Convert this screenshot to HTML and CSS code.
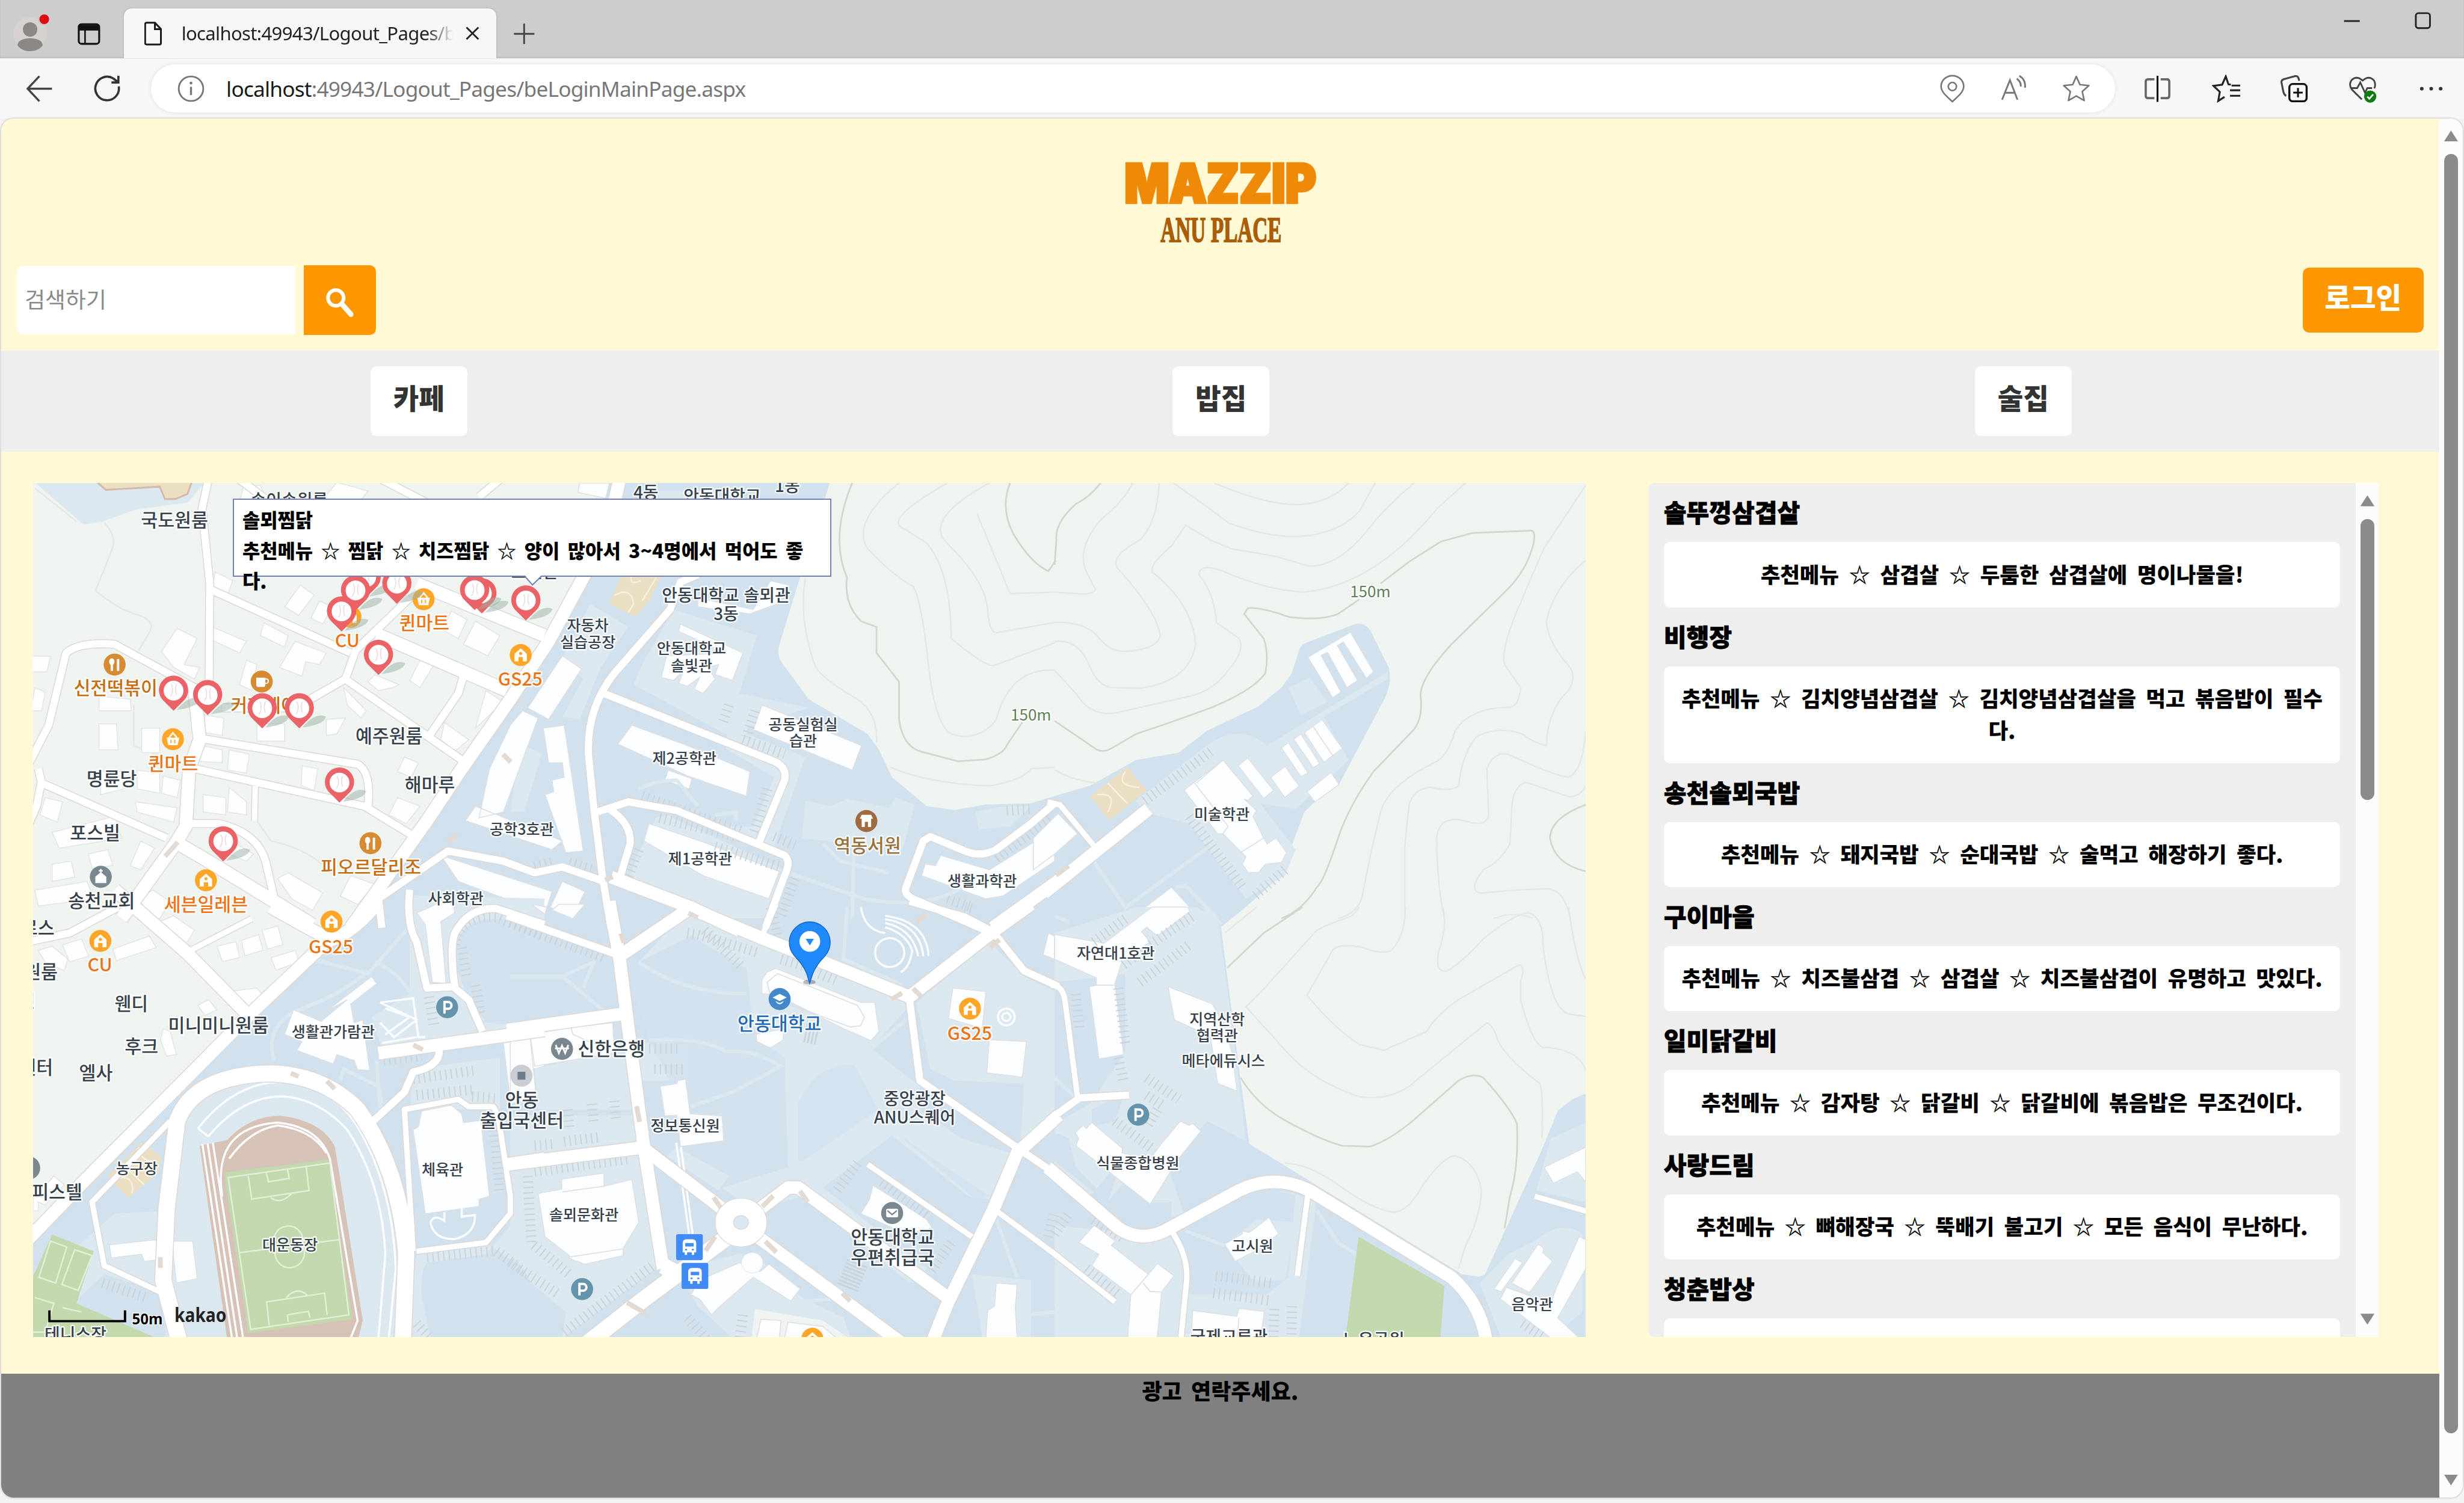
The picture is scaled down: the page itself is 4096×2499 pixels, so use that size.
FILE: index.html
```html
<!DOCTYPE html>
<html lang="ko">
<head>
<meta charset="utf-8">
<title>MAZZIP - ANU PLACE</title>
<link rel="stylesheet" href="styles.css">
</head>
<body>
<div class="window">
  <header class="tabbar">
    <svg class="avatar" viewBox="0 0 24 26"><circle cx="11.500" cy="14" r="10.500" fill="#d6d3ce"/><circle cx="11.500" cy="11.500" r="4.600" fill="#8b8782"/><path d="M3.500 21.500c0-6 16-6 16 0c-3 5-13 5-16 0z" fill="#8b8782"/><circle cx="20.500" cy="5" r="3.600" fill="#e00b0b" stroke="#cdcdcd"/></svg>
    <svg class="workspace" viewBox="0 0 16 16"><rect x="1.500" y="2" width="13" height="12.500" rx="1.800" fill="none" stroke="#111" stroke-width="1.200"/><path d="M1.500 2.500h13v3.500h-13z" fill="#111"/><path d="M5.500 5v9" stroke="#111" stroke-width="1"/></svg>
    <div class="tab">
      <svg class="tab-doc" viewBox="0 0 12 16"><path d="M1.500.8h5.500l4 4.200v9.200q0 1-1 1h-8.500q-1 0-1-1V1.800q0-1 1-1zM7 .8V5h4" fill="none" stroke="#1b1b1b" stroke-width="1.200"/></svg>
      <span class="tab-title">localhost:49943/Logout_Pages/beLogin</span>
      <svg class="tab-close" viewBox="0 0 10 10"><path d="M1 1l8 8M9 1l-8 8" stroke="#222" stroke-width="1.150"/></svg>
    </div>
    <svg class="newtab" viewBox="0 0 14 14"><path d="M7 .5v13M.5 7h13" stroke="#444" stroke-width="1.100"/></svg>
    <div class="controls">
      <svg viewBox="0 0 12 12"><path d="M1 6.500h10" stroke="#222" stroke-width="1.100"/></svg>
      <svg viewBox="0 0 12 12"><rect x="1.500" y="1.500" width="9" height="9.500" rx="1.600" fill="none" stroke="#222" stroke-width="1.100"/></svg>
    </div>
  </header>

  <div class="toolbar">
    <svg class="back" viewBox="0 0 18 18"><path d="M9 1L1.500 9L9 17M1.500 9H17" fill="none" stroke="#444" stroke-width="1.300"/></svg>
    <svg class="reload" viewBox="0 0 18 18"><path d="M16.200 7.500A7.500 7.500 0 1 1 12.800 2.500L15.500 4.600M16 .8V5H11.600" fill="none" stroke="#333" stroke-width="1.400"/></svg>
    <div class="address">
      <svg class="info" viewBox="0 0 18 18"><circle cx="9" cy="9" r="7.800" fill="none" stroke="#777" stroke-width="1.100"/><path d="M9 7.800v5.200" stroke="#777" stroke-width="1.300"/><circle cx="9" cy="5.400" r=".9" fill="#777"/></svg>
      <span class="url"><b>localhost</b>:49943/Logout_Pages/beLoginMainPage.aspx</span>
      <span class="address-icons">
        <svg viewBox="0 0 18 18"><path d="M9 17.200C5 13.500 1.800 11 1.800 7.500a7.200 6.800 0 0 1 14.400 0C16.200 11 13 13.500 9 17.200z" fill="none" stroke="#777"/><circle cx="9" cy="7.600" r="2.600" fill="none" stroke="#777"/></svg>
        <svg viewBox="0 0 18 18"><path d="M1.200 16L6.200 3.500L11 16M2.800 11.600h6.600M10.500 2.600q2.800 1.800 2.600 5M12.200 .8q4.200 2.600 3.600 7.600" fill="none" stroke="#777" stroke-width="1.100"/></svg>
        <svg viewBox="0 0 18 18"><path d="M9 1.200l2.300 5.200l5.700.6l-4.200 3.800l1.200 5.700L9 13.600l-5 2.900l1.200-5.700L1 7l5.700-.6z" fill="none" stroke="#777" stroke-linejoin="round"/></svg>
      </span>
    </div>
    <div class="tools">
      <svg viewBox="0 0 18 18"><path d="M7 3H3Q1.500 3 1.500 4.500v9Q1.500 15 3 15h4M11 3h4q1.500 0 1.500 1.500v9q0 1.500-1.500 1.500h-4" fill="none" stroke="#666" stroke-width="1.400"/><path d="M9 .8v16.600" stroke="#111" stroke-width="1.200"/></svg>
      <svg viewBox="0 0 18 18"><path d="M12 6.400L10.500 6.200L8.800 1.200L6.500 6.400L1 7.200l4 3.800L4 16.800l4-2.600M12.500 7H18M11.500 10H18M11.500 13.500H18" fill="none" stroke="#222" stroke-width="1.200"/></svg>
      <svg viewBox="0 0 18 18"><rect x="6" y="6" width="11" height="11" rx="2.200" fill="none" stroke="#111" stroke-width="1.300"/><path d="M11.500 8.500v6M8.500 11.500h6" stroke="#111" stroke-width="1.200"/><path d="M4 13.500Q2.500 13 2 10L1 5Q.8 3.500 2.400 3L9.600 1q1.700-.3 2.200 1.200L12.300 4" fill="none" stroke="#444" stroke-width="1.200"/></svg>
      <svg viewBox="0 0 18 18"><path d="M8.500 15.800L2.200 9.600Q0 6.500 1.800 3.700Q5 .2 9 3.800Q13 .2 16.200 3.700Q17.600 6.200 16.400 8.800M2 8.600h3.500L7.500 5l3 6.500L12 8.600h3" fill="none" stroke="#444" stroke-width="1.100"/><circle cx="13.800" cy="14" r="3.900" fill="#107c10"/><path d="M12 14l1.300 1.400l2.400-2.800" fill="none" stroke="#fff"/></svg>
      <svg viewBox="0 0 18 18"><g fill="#333"><circle cx="3" cy="9" r="1.150"/><circle cx="9" cy="9" r="1.150"/><circle cx="15" cy="9" r="1.150"/></g></svg>
    </div>
  </div>

  <div class="viewport">
    <div class="page">
      <div class="brand">
        <svg class="logo" viewBox="0 0 126 56">
          <text class="logo-main" x="2" y="27.500" textLength="122" lengthAdjust="spacingAndGlyphs">MAZZIP</text>
          <text class="logo-sub" x="25" y="52.500" textLength="77" lengthAdjust="spacingAndGlyphs">ANU PLACE</text>
        </svg>
      </div>
      <div class="searchrow">
        <input class="search" type="text" placeholder="검색하기">
        <button class="search-btn"><svg viewBox="0 0 18 20"><circle cx="6.600" cy="7" r="5" fill="none" stroke="#fff" stroke-width="2.300"/><path d="M10.500 11l5.700 6.500" stroke="#fff" stroke-width="3.300" stroke-linecap="round"/></svg></button>
        <button class="login">로그인</button>
      </div>
      <nav class="nav"><div><a>카페</a></div><div><a>밥집</a></div><div><a>술집</a></div></nav>

      <main class="main">
        <div class="map">
          <svg class="map-canvas" viewBox="21 307.300 988 543.500" preserveAspectRatio="none">
            <defs>
              <g id="roads">
                <g transform="translate(0 295.850) scale(.22088 .18408)">
                  <path class="r2" d="M600 50L582 150L604 410L602 790"/>
                  <path class="r2" d="M80 1040L140 900L190 650Q230 610 330 620L560 770L600 790L575 830"/>
                  <path class="r1" d="M560 770L575 950L545 1050L535 1250L505 1310L350 1568"/>
                  <path class="r2" d="M605 430L1010 650"/>
                  <path class="r2" d="M1180 460L1025 640L995 740L850 840L640 840"/>
                  <path class="r2" d="M1000 745L1330 1020"/>
                  <path class="r1" d="M1085 585L1460 780"/>
                  <path class="r2" d="M1335 730L1320 790L1240 930"/>
                  <path class="r2" d="M690 50L790 140M1100 50L1260 150M1440 50L1380 110"/>
                  <path class="r1" d="M1200 410L1568 590"/>
                  <path class="r2" d="M575 945L1030 1035Q1070 1060 1060 1180"/>
                  <path class="r2" d="M560 1050L1050 1180L1200 1290"/>
                  <path class="r3" d="M735 1110L733 1230"/>
                  <path class="r2" d="M110 1050L120 1100L480 1290M120 1090L105 1180L80 1250"/>
                  <path class="r2" d="M530 1240L630 1240Q740 1270 765 1370L790 1500"/>
                  <path class="r1" d="M500 1300L600 1370L900 1590"/>
                </g>
                <g transform="translate(324.710 295.850) scale(.22088 .18408)">
                  <path class="r1" d="M315 50L280 230L205 400L110 610L0 810L-140 1050L-240 1230L-400 1500L-460 1600"/>
                  <path class="r2" d="M540 380L490 405L460 500L300 720Q220 840 225 1000L240 1180L265 1420L290 1600"/>
                  <path class="r2" d="M270 790L750 1020Q800 1040 790 1090L715 1310"/>
                  <path class="r2" d="M250 1200L340 1165L480 1195L790 1350Q810 1370 790 1420L735 1600"/>
                  <path class="r2" d="M285 1190Q350 1240 345 1310L315 1430"/>
                  <path class="r2" d="M-370 1600L-380 1500L-180 1335L-20 1370L70 1410L150 1390L270 1440"/>
                  <path class="r1" d="M290 1425L520 1530L660 1610"/>
                  <path class="r2" d="M1568 1170L1500 1240L1400 1330Q1350 1360 1300 1330L1210 1285L1190 1300L1140 1460Q1130 1490 1180 1510L1390 1620"/>
                  <path class="r1" d="M1390 1600L1600 1420"/>
                </g>
                <g transform="translate(671.070 295.850) scale(.22549 .18408)">
                  <path class="r1" d="M-30 1480L265 1190"/>
                  <path class="r3" d="M-20 1165L15 1175L110 1315"/>
                </g>
                <g transform="translate(0 577.260) scale(.22088 .18408)">
                  <path class="r1" d="M330 -60L540 160L720 380M780 0L900 80L950 110"/>
                  <path class="r1" d="M1090 -20Q1020 90 940 120L720 370L240 950L80 1150"/>
                  <path class="r2" d="M80 120L200 90L340 0"/>
                  <path class="r3" d="M540 155L725 40"/>
                  <path class="r2" d="M1180 -60Q1170 60 1200 120L1230 280L1310 275Q1295 140 1310 90Q1350 0 1430 5L1568 60"/>
                  <path class="r2" d="M1310 280L1350 320L1390 430"/>
                  <path class="r1" d="M1090 505L1568 425"/>
                  <path class="r2" d="M1265 490Q1270 550 1190 570L1165 640L1075 740"/>
                  <path class="r0" d="M520 1520L470 1290L480 1040L510 740Q560 580 780 575Q930 580 1030 700Q1150 900 1170 1200L1160 1520"/>
                  <path class="r3" d="M490 740L265 1020L300 1240L460 1330"/>
                  <path class="r3" d="M1190 1190L1165 700L1320 665L1350 690L1420 690Q1430 700 1440 760L1470 1000L1470 1060L1400 1160L1200 1190"/>
                  <path class="r1" d="M1460 890L1568 870"/>
                </g>
                <g transform="translate(324.710 577.260) scale(.22088 .18408)">
                  <path class="r1" d="M-10 425L320 370M-10 890L390 830"/>
                  <path class="r1" d="M285 -20L315 180L340 420L385 830L440 1250"/>
                  <path class="r2" d="M-10 30L310 165"/>
                  <path class="r1" d="M510 10L320 165"/>
                  <path class="r1" d="M510 0L720 105L900 190L1150 310L1390 85L1500 -10"/>
                  <path class="r3" d="M765 -10L725 100"/>
                  <path class="r2" d="M1150 -20L1310 35L1390 85L1480 220L1580 275"/>
                  <path class="r2" d="M1150 320L1180 600L1470 840L1580 930"/>
                  <path class="r1" d="M1580 720L1460 850L1390 1050L1260 1370L1210 1520"/>
                  <path class="r1" d="M390 840L640 1070M680 1080L800 970L830 970L1000 1120L1260 1350M690 1120L1130 1510"/>
                  <path class="r0" d="M660 1110L380 1360L220 1510M440 1240L470 1260"/>
                  <path class="r3" d="M1030 890L1330 1140M1400 1050L1580 1210"/>
                </g>
                <g transform="translate(671.070 577.260) scale(.22549 .18408)">
                  <path class="r1" d="M-20 900L180 1110Q240 1160 310 1120L520 980Q620 920 720 980L1120 1280Q1210 1380 1220 1520"/>
                  <path class="r2" d="M-20 740L70 660L210 650"/>
                  <path class="r3" d="M-10 270Q25 270 30 330L65 660M715 990L685 1275M1355 1000L1510 1055M-10 1190L170 1365"/>
                  <path class="r3" d="M330 1120Q380 1210 372 1300L355 1510"/>
                </g>
              </g>
              <symbol id="redpin" viewBox="-12 -12 32 28" overflow="visible"><path d="M2 12Q10 2 17 5Q16 10 2 12z" fill="#9ab0a4" opacity=".5"/><path d="M0 12.500L-7 5.500A9.300 9.300 0 1 1 7 5.500z" fill="#ec6367"/><circle cy="-.3" r="6.300" fill="#fff"/><path d="M-1.500-4.500q2 4-.5 8M2-4.500q-1.500 3 0 7" fill="none" stroke="#ecd9d9" stroke-width=".6"/></symbol>
              <symbol id="store" viewBox="-8 -8 16 16" overflow="visible"><circle r="7" fill="#ffa629"/><path d="M-3.900 4V-.8L0-4.200L3.900-.8V4H1.400V1.300h-2.800V4z" fill="#fff"/><circle cy="-1" r="1" fill="#ffa629"/></symbol>
              <symbol id="basket" viewBox="-8 -8 16 16" overflow="visible"><circle r="7" fill="#ffa629"/><path d="M-4-1H4L3 3.800H-3z" fill="#fff"/><path d="M-2.500-1L0-4L2.500-1" fill="none" stroke="#fff"/><path d="M-1.200.3v2.300M1.200.3v2.300" stroke="#ffa629" stroke-width=".7"/></symbol>
              <symbol id="food" viewBox="-8 -8 16 16" overflow="visible"><circle r="7" fill="#d68a31"/><path d="M-1.800-3.500V4M2.200-3.500V4" stroke="#fff" stroke-width="1.500"/><ellipse cx="-1.800" cy="-1.800" rx="1.700" ry="2.200" fill="#fff"/></symbol>
              <symbol id="parking" viewBox="-8 -8 16 16" overflow="visible"><circle r="7" fill="#6394ac"/><path d="M-1.700 4V-3.300H.6a2.100 2.100 0 0 1 0 4.300H-1.700" fill="none" stroke="#fff" stroke-width="1.500"/></symbol>
              <symbol id="bus" viewBox="-9 -9 18 18" overflow="visible"><rect x="-8.500" y="-8.300" width="17" height="16.600" rx="1.200" fill="#418cf4"/><path d="M-4.300-2.500Q-4.300-5-2-5H2Q4.300-5 4.300-2.500V3.300H3V5H1.500V3.300h-3V5H-3V3.300H-4.300z" fill="#fff"/><path d="M-2.700-2.600H2.700V-.4H-2.700z" fill="#418cf4"/><path d="M-2.800 1.600h1.300M1.500 1.600h1.300" stroke="#418cf4"/></symbol>
            </defs>

            <rect class="land" x="21" y="307" width="988" height="544"/>
            <path class="campus" d="M388 307L371 366L349 406L320 445L295 484L262 534L232 585L208 596L160 645L53 752L21 789V851H1009V696L1000.300 699.700L991.300 707L981 732L945 811L941.700 812.500L930.400 811L795 728L787 669L777 590L793 577L815.400 557L821 540.700L830 516.700L836.800 510.300L852.600 498.300L881.900 443Q886 433 883.700 424.700L871.800 400.800Q868 396 862.700 397L831 409Q827 411 826.700 413.700L822 428.400L815.400 437.600L800.700 449.600L768 465L750 479L723 483.600L693.600 500L671 506.600L656 511.200L627 512L607.400 515.500L589.800 513L567.700 494.700L558.800 476.300L552 467L514.700 445L497 421Q494 416 496 410L509 367.600L528 307.300z"/>

            <g transform="translate(0 295.850) scale(.22088 .18408)">
              <path class="lawn" d="M90 50L240 206L290 198L390 155L540 130L600 50z"/>
              <path class="sand edge" d="M270 50L305 86L460 75L475 118L505 118L540 100L555 50z"/>
              <path class="contour" d="M100 80L220 195M300 200Q340 250 320 300L275 435Q340 500 400 520Q450 540 430 580L400 640M385 830L385 970L560 1050M740 1230L780 1300Q900 1330 960 1420"/>
              <g class="bld">
                <path d="M80 660L145 662L135 715H80zM100 770L130 785L120 850H90zM285 800L375 810L378 850H285zM510 565L568 600L530 690L575 700L560 740L500 700L465 645zM610 560L710 610L690 650L610 605zM620 370L670 400L655 450L610 430zM760 545L830 590L820 630L750 590zM850 610L940 650L920 690L880 680L870 730L805 700zM710 675L740 690L725 780L690 760zM865 415L905 450L860 520L820 490zM920 470L955 490L930 550L895 530zM1300 505L1345 535L1320 600L1275 570zM1370 540L1440 590L1405 660L1335 620zM1400 780L1450 820L1370 910zM1060 750L1080 725L1150 760L1130 770L1090 780zM1210 675L1250 690L1210 770L1180 745zM990 770L1055 850L1040 875L1000 830zM940 880L995 875L970 930L940 935zM1280 890L1350 950L1310 990L1270 950zM285 895H335L340 985H285zM408 910H460V995H408zM590 865L645 875L640 935L590 925zM740 895H820V955H740zM580 970L640 985V1030L575 1025zM660 985L718 1000L710 1065L655 1055zM870 1040L915 1050L905 1125L868 1110zM1165 1010L1205 1030L1185 1080L1145 1060zM1145 1150L1210 1180L1170 1240L1120 1210zM395 1055L460 1065V1135L395 1120zM470 1075L520 1090L510 1150L465 1135zM290 1060H355V1120L290 1140zM585 1140L650 1150V1210L585 1200zM660 1115L710 1165V1210L655 1200zM390 1165L510 1185L500 1235L395 1200zM130 1150L180 1165L165 1235L115 1210zM150 1270L330 1215L350 1290L170 1325zM255 1345L310 1330L325 1385L265 1395zM405 1300L445 1325L405 1400L375 1385zM150 1380L205 1370L215 1425L150 1440zM100 1470L250 1440L270 1500L110 1525zM400 1500L440 1470L490 1510L460 1568H430zM800 1430L830 1410L930 1480L900 1540L840 1500zM1010 1420L1080 1450L1030 1520L980 1490zM650 1340L680 1310L730 1345L710 1370zM700 80L750 70L770 130H690zM970 60L1060 90L1040 120H930z"/>
              </g>
            </g>

            <g transform="translate(324.710 295.850) scale(.22088 .18408)">
              <path class="lawn" d="M230 480L340 560L260 700L200 880L150 870L210 740L150 670zM470 500L710 590L660 790L860 840L620 930L355 760L380 690zM850 1160L920 1180L970 1155L1090 1185L1110 1150L1165 1175L1130 1330L840 1290zM630 870L700 840L680 930L850 1010L760 1320L600 1250L700 1250L760 1080L620 980zM30 960L90 1000L40 1200H0zM420 1220L370 1340L340 1430L640 1568H740L790 1400L450 1210zM390 90H560L620 180H370zM1340 1200L1420 1180L1500 1180L1440 1250L1350 1260z"/>
              <path class="sand" d="M325 370H440L405 460L360 526L285 480z"/><path class="white-line" d="M300 450Q350 420 355 480L340 510M350 380Q340 420 375 400M380 470L420 390"/>
              <g class="bld campus-bld">
                <path d="M200 62H285L275 115L195 95zM150 660L205 705L110 880L50 840zM35 850L80 875L-20 1200L-90 1220L-60 1050L0 900zM95 910L155 900L210 1335L160 1340L100 1140L125 1130L120 1090L155 1080L150 1030H110zM-100 1180L150 1300L120 1330L-130 1230zM490 550L670 650L640 745L590 725L600 690L570 700L590 740L555 790L530 775L545 735L510 765L485 755L500 710L470 745L435 735L450 660L620 650L485 575zM540 460L700 500L750 400L800 415L770 480L690 515L540 490zM350 900L510 970L690 1060L680 1145L510 1075L310 965zM455 1055L523 1085L515 1120L445 1090zM725 830L1012 970L985 1055L700 915zM400 1240L570 1310L775 1405L745 1500L555 1420L385 1300zM-200 1350L120 1475L100 1550L-150 1440zM150 1440L215 1475L180 1560L115 1530zM1240 1350L1380 1400L1568 1260V1370L1420 1490L1370 1500L1185 1420L1195 1380L1225 1385z"/>
              </g>
              <path class="contour" d="M1120 62Q980 200 1030 290Q1100 380 1160 420Q1180 450 1200 640Q1220 900 1270 930Q1350 960 1400 880Q1440 700 1568 710M1260 62Q1100 170 1120 210L1200 270Q1270 370 1270 600Q1360 690 1390 695L1568 615M1380 62Q1200 180 1250 260Q1370 400 1375 500Q1380 580 1400 580L1568 545M850 390Q830 540 880 700Q900 740 1000 810Q1060 860 1055 960M1095 1045Q1200 1100 1380 1110Q1480 1090 1500 1050L1568 1045M1345 170L1440 445L1568 440"/>
              <path class="contour major" d="M985 62Q920 250 970 390Q960 480 1010 540L1055 560V650L1120 750V880Q1130 970 1180 990L1290 1025L1370 1018Q1420 1000 1430 970L1475 890M1440 62Q1410 150 1450 240Q1500 340 1550 367L1572 330"/>
              <g class="parking"><path d="M630 830L610 900M705 850L680 940M670 950L790 1000M380 1145L670 1270M740 1120L700 1280M430 1220L670 1290M590 1320L780 1390M760 1285L820 1315M820 1430L780 1560M370 1330L340 1420M70 1390L130 1370M170 1375L240 1400M1430 1195L1500 1190M1400 1360L1560 1220M1260 1500L1330 1530"/></g>
              <path class="track" d="M900 1310L950 1370L1090 1410M990 1340L985 1568M800 1410L1020 1500Q1200 1540 1300 1460M370 1120Q420 1090 480 1090L540 1180M590 1210L650 1200V1230"/>
            </g>

            <g transform="translate(671.070 295.850) scale(.22549 .18408)">
              <path class="lawn" d="M430 970Q520 890 600 970L940 715V740L760 870L830 1020L680 1190L580 1170L680 1330L650 1420L540 1500L380 1240L250 1200L230 1160zM660 770L720 735L770 820L695 865z"/>
              <path class="track" d="M110 1370L200 1530L430 1325M340 1460L370 1455L460 1568M0 1560L40 1580"/>
              <path class="sand" d="M205 1045L260 1125L155 1230L100 1145z"/><path class="white-line" d="M150 1100L205 1170M120 1140Q180 1130 150 1200M200 1060Q170 1110 240 1115"/>
              <g class="bld campus-bld"><path d="M835 578L900 715L880 738L815 612L798 625L855 745L825 770L770 648L752 658L808 785L785 805L715 665zM755 880L812 980L760 1028L705 925zM695 930L748 1033L730 1047L675 948zM660 960L715 1065L695 1078L640 978zM545 1013L618 1125L590 1153L518 1040zM650 1042L690 1110L650 1150L610 1080zM780 1063L803 1105L735 1165L712 1130zM475 1020L560 1145L545 1160L535 1155L570 1195L560 1215L590 1290L600 1310L625 1290L655 1340L640 1375L595 1380L575 1410L545 1408L530 1380L540 1355L475 1275H460L365 1125zM330 1460L382 1530L340 1568H215zM10 1205L65 1275L0 1345L-60 1400V1290z"/><path d="M395 1100L490 1250L475 1275M525 1340L590 1290M400 1100L475 1020M730 905L785 1005" class="seam"/></g>
              <path class="contour" d="M220 62Q200 120 130 190Q60 290 90 370L115 430Q110 450 60 445L0 440M295 62Q290 200 240 260Q150 320 180 360Q290 510 298 590Q290 640 190 645Q150 640 120 590Q80 540 0 545M335 62Q450 160 490 200Q600 250 690 247Q800 240 860 160L905 62M450 62Q600 140 690 137Q780 130 830 62M1015 62Q930 150 880 230Q800 350 720 350L620 315L500 290L440 260L370 208L330 280Q270 340 275 370Q390 480 398 620Q380 750 240 772L160 770Q120 760 100 700Q70 600 0 610M1160 62L1080 150Q900 420 700 440Q600 430 500 380Q410 330 407 380Q450 440 457 545L520 600Q540 640 490 710Q450 780 380 800L170 858Q100 870 60 790L0 710M1499 70L1380 290L1300 520Q1260 640 1270 690L1315 770Q1310 840 1280 838Q1170 840 1130 920Q1110 1010 1070 1030Q940 1110 920 1200Q890 1350 870 1480Q860 1550 800 1568M1499 330Q1410 420 1388 540Q1390 600 1440 680Q1480 720 1450 780Q1390 850 1388 970Q1350 960 1320 930Q1250 900 1190 940Q1150 1000 1140 1110Q1120 1130 1060 1115Q1010 1120 1000 1180L988 1320V1568M1499 920Q1490 1060 1450 1080Q1400 1070 1280 1000Q1240 990 1220 1050L1225 1210Q1220 1250 1170 1235Q1080 1200 1078 1300Q1080 1450 1100 1568M1499 1110Q1480 1150 1450 1147L1330 1097Q1290 1110 1290 1200L1285 1310Q1260 1370 1210 1400Q1160 1480 1210 1480Q1280 1470 1390 1465Q1440 1470 1455 1568M0 1055Q50 1090 120 1100M1240 1568Q1300 1540 1350 1568"/>
              <path class="contour major" d="M130 62Q100 110 60 135Q0 200 5 260L0 345M0 885L120 985Q140 995 160 980L230 930Q330 890 440 840Q560 780 595 720Q605 650 590 600L535 515L545 495Q580 490 660 525Q750 540 800 515L860 465M920 410L1000 335L1090 265L1180 235L1345 227Q1360 230 1350 280Q1330 370 1270 440L1120 620Q1030 740 1033 800Q1040 880 1010 920L900 1060Q830 1180 800 1290Q760 1440 740 1460Q700 1540 640 1568M1499 1175Q1400 1220 1398 1290Q1410 1380 1499 1405"/>
              <g class="parking"><path d="M440 990L245 1170M380 1215L530 1460M650 1400L565 1490"/></g>
            </g>

            <g transform="translate(0 577.260) scale(.22088 .18408)">
              <path class="lawn" d="M500 780L560 620Q780 540 960 640Q1130 900 1160 1200L1130 1500H480L460 1330L300 1270L210 1370L100 1300L330 1060L480 1050zM1180 -40L1568 -30V170L1568 420L1100 490L1070 380L1180 300zM1190 560L1440 520L1440 700H1180zM1200 1190L1400 1160L1568 1300V920L1470 900L1500 1060L1400 1200L1230 1230Q1210 1250 1215 1350L1240 1490H1170z"/>
              <path class="track" d="M900 180L1060 230L1170 80M1060 220Q990 300 850 360Q760 420 790 530M1080 190Q1180 240 1220 400M1420 50L1460 240L1568 240M980 600L990 560L1090 620L1100 680M1085 530L1095 700"/>
              <path class="campus" d="M1310 200Q1300 40 1430 40Q1500 40 1568 90V420L1400 400L1340 290zM1520 250H1568V390H1460Q1400 330 1450 260z"/>
              <path class="green" d="M150 1132L270 1190L220 1370L450 1490H90V1290z"/>
              <path class="clay" d="M575 825L655 805Q720 720 810 722Q930 740 965 830L1045 1430L1030 1500H655z"/>
              <path class="green" d="M645 918L945 873L1015 1425L715 1473z"/>
              <path class="white-line w" d="M583 820L668 1490M598 818L683 1490M613 815L700 1490M640 1000Q610 760 800 745Q920 760 950 870L1030 1430L1010 1490M660 870Q720 770 800 755Q900 770 940 850M570 765Q680 600 820 605Q960 620 1030 760Q1130 960 1140 1250L1120 1490M600 793Q700 650 820 655Q920 665 1000 770Q1100 950 1110 1200L1090 1490M570 765L600 793"/>
              <path class="pitch" d="M657 935L950 885L1005 1410L722 1460zM690 1195L975 1150M715 930L725 1010L890 980L882 900M767 918L773 950L833 938L828 908M780 1005Q810 1030 840 990M795 1180A42 50 0 1 1 870 1170A42 50 0 1 1 795 1180M775 1445L768 1365L935 1335L942 1410M830 1435L828 1410L888 1398L893 1420M825 1350Q855 1310 885 1342M145 1155L192 1175L160 1300L112 1280zM215 1185L265 1205L225 1325L178 1305zM100 1350L155 1370L130 1470H95M180 1385L235 1400"/>
              <path class="sand" d="M410 812L465 865L455 920L368 1005L310 930z"/><path class="white-line" d="M345 880L415 960M400 830Q400 880 450 880M330 940Q390 920 380 990"/>
              <g class="bld"><path d="M110 150L150 135L195 180L185 220L130 190zM180 130L235 110L255 170L200 190zM325 145L430 100L450 140L335 185zM460 50L500 30L560 80L540 120L500 125zM625 135L680 120L690 175L640 188zM695 115L745 95L757 150L705 168zM755 80L800 65L815 130L770 145zM780 175L850 150L862 190L795 218zM670 290L740 280L757 305L720 345L670 320zM570 340L600 320L625 355L590 375zM470 420L490 430L508 510L480 515L462 460zM95 1010L155 930L185 960L130 1030L110 1020V1050H95z"/></g>
              <g class="bld campus-bld"><path d="M1070 240L1085 265L1010 335L1020 400L1045 390L1065 565L1030 562L1020 530L970 510L960 543L855 495L870 465L820 440L845 355L925 395L1000 320L940 360zM1200 20L1240 0L1300 -40L1310 20L1270 50L1285 265L1245 260L1225 60zM315 1168L450 1150V1220L415 1225L408 1200L320 1213zM495 1155H555L568 1285L508 1300zM1215 705L1300 685L1330 715L1335 745L1385 738L1410 1000L1380 1010V1035L1225 1060L1190 770L1205 760zM1450 470L1568 445V550L1535 560L1540 660L1470 670zM1550 990L1568 980V1150z"/></g>
              <path class="white-line w" d="M1095 330L1190 315L1205 450H1225M1095 330L1200 390L1135 450L1095 400M1110 350L1180 380L1110 440M1100 470L1200 450M1240 1090Q1250 1060 1280 1085V1055M1240 1090Q1250 1150 1310 1148Q1370 1130 1368 1065L1330 1070V1040"/>
              <g class="parking"><path d="M1330 140L1345 250M1370 270L1385 370M1235 310L1250 410M1310 130Q1320 30 1430 35L1568 100M1105 530L1215 515M1190 595L1370 565M1200 650L1370 630M1360 655L1425 660M1425 770L1440 990M1230 1210L1420 1190M1430 1190L1568 1310M1520 930L1540 1250M295 1300L420 1350M1200 1440L1240 1490"/></g>
            </g>

            <g transform="translate(324.710 577.260) scale(.22088 .18408)">
              <path class="lawn" d="M370 190L510 10L700 100L1130 320L1150 340L1040 490L1180 620V700L1300 800L1440 850L1380 1010L1320 1000L1100 790L900 970L1200 1250L1150 1300L840 1000L700 1050L610 970L800 900L790 540L700 420L680 210L520 100zM1170 330L1380 120L1480 240L1568 290V700L1470 820L1480 610L1280 600L1210 560zM0 720H370L390 830L0 890zM0 880L380 850L440 1230L150 1490L160 1400L60 1300L0 1180zM70 560L360 470L500 470L500 600H380L370 700H80zM480 830L630 930L600 980L450 860zM480 1250L660 1200L700 1200L840 1350L960 1420L980 1490H640L540 1380zM1330 1270L1500 1290V1490H1360z"/>
              <path class="campus" d="M830 880V680Q880 540 990 545L1060 700L840 880zM1110 780L1380 1000L1340 1010zM540 260L680 300V420L790 520Q800 560 780 560L500 700L400 460L330 190L370 190z" opacity=".9"/>
              <path class="land" d="M695 1490L705 1390L900 1430L975 1490z"/>
              <circle class="lawn" cx="848" cy="525" r="28"/>
              <path class="track" d="M370 190Q500 300 680 300M400 460Q560 450 620 500Q700 490 780 550L640 640L520 690M0 240L150 240L240 190L210 280M150 240L270 360M970 0L960 180L1130 270M1040 490L1140 390M1400 1080L1460 1280M800 1370L960 1350M1480 1410L1568 1400"/>
              <path class="white-line w" d="M1080 30Q1200 50 1205 170M1080 42Q1180 60 1190 170M1080 55Q1160 75 1175 170M1080 70Q1140 90 1158 150Q1150 210 1125 225M1010 0Q1020 80 1080 90M1051 157A42 50 0 1 1 1135 157A42 50 0 1 1 1051 157M478 815L515 1130M490 815L525 1130M1405 380A24 29 0 1 1 1453 380A24 29 0 1 1 1405 380M1417 380A12 14 0 1 1 1441 380A12 14 0 1 1 1417 380"/>
              <g class="bld campus-bld"><path d="M740 225L765 212L1010 330L1050 330L1062 430L1040 462L960 420L760 300L725 300V250zM708 440L790 420L785 460L750 487L710 465zM1275 280L1370 292L1360 420L1262 385zM1380 458L1487 465L1475 588L1373 573zM57 440L180 415L295 400L300 505L70 550zM0 460L57 450L75 660L0 680zM432 620L480 610L482 600L505 595L518 715L610 722L615 808L490 828L480 720L445 722zM80 990L148 975V940L270 920V965L350 942L370 1090L325 1180V1205L215 1235L170 1215V1205L100 1140zM545 1290L660 1230L720 1260L745 1235L835 1320L808 1362L700 1280L600 1385L580 1410L545 1355L520 1340zM1045 962L1200 1080L1215 1110L1140 1130L1010 1060L1035 1010zM1400 1300L1460 1305L1455 1385L1460 1490H1370L1375 1395L1395 1380zM722 1425L780 1430L775 1490H710zM800 1435L900 1450L940 1490H790zM1550 90L1568 100V180L1535 165zM60 -10L105 0L100 25zM140 -10H215L180 40L120 10z"/><ellipse cx="697" cy="1230" rx="31" ry="35"/></g>
              <path class="seam" d="M748 300L740 260L770 230L1000 340L1020 380L1010 410L980 415L790 330M300 505L180 440L175 415M150 985L270 965M170 1210L325 1182"/>
              <g class="parking"><path d="M0 55L270 175M510 90L540 95L720 160M560 80L670 210M780 180L850 205M890 230L940 255M400 490L490 490M415 560L500 560M165 700L170 760M235 680L240 750M300 670L305 740M70 825L125 820M155 810L260 795M70 915L345 870M50 930L60 1160L170 1270M0 1230L140 1340M155 1470L410 1240M510 1420L570 1500M670 1410L660 1500M1000 885L935 990M1070 950L1210 1070M1270 1160L1210 1260M1550 1140L1568 1050M750 0L770 100M1310 0L1340 10"/><path class="dense" d="M1000 1230L970 1320M850 430L890 440"/></g>
            </g>

            <g transform="translate(671.070 577.260) scale(.22549 .18408)">
              <path class="lawn" d="M460 40L500 400L540 810L430 740L320 900L370 1080L150 1020L190 870L100 1000L0 910V750L100 680L200 500V230L0 260V90L230 0H400zM0 1100L160 1120L320 1130L380 1250V1340H600L660 1280L680 990L620 980L740 1010L690 1490H0zM1400 800L1499 745V1020L1360 980zM1360 1150Q1430 1080 1490 1130V1400L1400 1490H1260L1200 1300L1280 1200zM480 1170L570 1080L680 1090L650 1290H560z"/>
              <path class="campus" d="M0 280L90 290L130 660L70 640zM0 780L40 800L60 900L190 1060L0 880zM200 640L105 700V760L170 740zM150 1020L210 930L280 1020L330 1020V1090L240 1110z"/>
              <path class="green" d="M858 1140L1100 1310L1088 1500H820z"/>
              <path class="track" d="M0 590L60 660M740 1050L800 1160L850 1200M370 1120L480 1170M60 1290L30 1410L0 1370M30 1410L150 1370M420 0L470 60"/>
              <path class="contour" d="M570 0L480 90M860 0L840 30Q770 60 740 80L600 270L540 345L640 480Q720 600 860 655Q940 670 1000 620L1220 400Q1240 410 1250 460Q1280 530 1370 610Q1380 650 1375 800M990 0Q990 100 950 150Q920 165 870 140Q790 120 780 160L712 305Q790 420 860 475L930 495L1050 430Q1080 370 1140 320L1310 200Q1330 200 1315 260V320Q1350 480 1380 485Q1480 490 1499 565M1095 0Q1110 60 1085 150Q1070 230 1110 220Q1150 190 1210 110Q1300 20 1340 20Q1380 40 1378 130Q1390 250 1410 310Q1430 370 1460 372L1499 378M1450 0Q1470 180 1499 250M650 885Q720 890 800 960Q900 1050 960 1055Q1000 1050 1040 960Q1100 860 1130 860Q1190 880 1205 980Q1200 1080 1160 1170L1140 1250"/>
              <path class="contour major" d="M700 0L590 90L487 210M525 590Q570 680 640 730Q740 800 810 825L890 828Q940 810 1010 740L1140 600Q1180 570 1210 590Q1290 700 1305 750Q1310 900 1285 1000L1270 1110"/>
              <g class="bld campus-bld"><path d="M0 95L140 125L275 0H375L382 15L290 100L260 70L245 85L270 120L190 190L170 265L195 510L125 525L98 275L118 270V245L0 180zM320 275L445 335L475 400L500 500L515 636L460 610L440 450L410 430L338 390zM58 780L80 755L90 765L105 745L192 835L190 850L270 870L300 820L355 740L380 755L390 748L413 775L350 870L270 1027L60 825L68 800zM112 1100L172 1155L160 1170L265 1270L290 1232L337 1275L302 1330L288 1510H205L215 1340L105 1240L125 1200L68 1160zM605 1073L632 1130L580 1180L510 1225L480 1165L530 1130V1120L550 1125zM390 1395L515 1415L520 1388L592 1398L580 1500H385zM1382 900L1499 830V950L1475 915L1408 955zM1365 1165L1380 1180L1378 1195L1405 1225L1340 1333L1290 1300zM1300 1215L1320 1230L1260 1330L1240 1320zM1480 1140L1499 1150V1250L1420 1420L1480 1490H1400L1258 1355L1275 1315L1400 1370L1415 1320z"/></g>
              <path class="seam" d="M105 270H170M215 1340L265 1270M300 1330H270L250 1300M520 1420L515 1490"/>
              <g class="parking"><path d="M110 120L200 40M270 130L390 30M240 260L380 130M195 200L250 150M60 300L70 430M180 280L200 480M180 520L195 610M260 590L350 665M260 650L310 690M170 740L280 840M290 700L260 760M455 1275L610 1300M448 1335L605 1360M620 1390L618 1490M670 1380L668 1490M1320 1440L1380 1490M110 1080L200 1150M90 1250L180 1340M0 1130L40 1060"/></g>
            </g>

            <use href="#roads" class="casing"/>
            <use href="#roads" class="surface"/>

            <g class="crossing"><path d="M291 531L285 536M444 584L438 581M395 594L397 600M589 582L583 587M636 598L630 603M574 632L567 636M581 629L586 634M405 704L407 714M454 762L459 769M492 761L485 768M509 758L514 765M487 790L494 797M455 787L449 796M399 829L411 836M536 823L541 828M102 800V807M185 683L190 685M208 688L213 693M263 665L269 668M390 558L385 560M105 545L113 536M672 557L680 551M320 480L325 485"/></g>
            <ellipse class="roundabout" cx="471.500" cy="778" rx="16.500" ry="15.500"/>
            <ellipse cx="471.500" cy="778" rx="4.800" ry="4.400" fill="#dce8f0" stroke="#d6d2d0" stroke-width=".4"/>

            <g class="lbl l10" transform="translate(0 3.600)">
              <text x="411" y="313.500">4동</text><text x="501" y="309.500">1동</text><text x="459.500" y="316">안동대학교</text>
              <text x="462" y="379">안동대학교 솔뫼관</text><text x="462" y="391">3동</text>
              <text x="374" y="398" class="s">자동차</text><text x="374" y="408.500" class="s">실습공장</text>
              <text x="440" y="412.500" class="s">안동대학교</text><text x="440" y="423.500" class="s">솔빛관</text>
              <text x="511" y="461" class="s">공동실험실</text><text x="511" y="471.500" class="s">습관</text>
              <text x="435.500" y="482.500" class="s">제2공학관</text><text x="445.500" y="546.500" class="s">제1공학관</text>
              <text x="332" y="527.500" class="s">공학3호관</text><text x="290" y="571.500" class="s">사회학관</text>
              <text x="625" y="560.500" class="s">생활과학관</text><text x="777.500" y="518" class="s">미술학관</text>
              <text x="710" y="606.500" class="s">자연대1호관</text>
              <text x="774.500" y="648.500" class="s">지역산학</text><text x="774.500" y="659" class="s">협력관</text><text x="778.500" y="675" class="s">메타에듀시스</text>
              <text x="212" y="656.500" class="s">생활관가람관</text><text x="436" y="716.500" class="s">정보통신원</text>
              <text x="281.500" y="744.500" class="s">체육관</text><text x="371.500" y="773" class="s">솔뫼문화관</text>
              <text x="184.500" y="792" class="s">대운동장</text><text x="87" y="743.500" class="s">농구장</text><text x="48" y="849.500">테니스장</text>
              <text x="724" y="740" class="s">식물종합병원</text><text x="797" y="793" class="s">고시원</text><text x="975" y="830" class="s">음악관</text>
              <text x="782" y="851">국제교류관</text><text x="874" y="853">노은공원</text>
              <text x="184" y="318.500">송이송원룸</text><text x="340" y="364">포켓빌</text>
              <text x="872" y="376.500" class="height">150m</text><text x="656" y="455" class="height">150m</text>
              <text x="582" y="699.500">중앙광장</text><text x="582" y="711.500">ANU스퀘어</text>
            </g>
            <g class="lbl l12" transform="translate(0 4.200)">
              <text x="111" y="331">국도원룸</text><text x="247.500" y="468.500">예주원룸</text><text x="273.500" y="499.500">해마루</text>
              <text x="71" y="495.500">명륜당</text><text x="60.500" y="530">포스빌</text><text x="64.500" y="573.500">송천교회</text>
              <text x="83.500" y="639">웬디</text><text x="139" y="652.500">미니미니원룸</text><text x="90" y="666">후크</text><text x="61" y="683">엘사</text>
              <text x="24" y="590.500">로스</text><text x="26" y="618.500">원룸</text><text x="17" y="637">원</text><text x="23" y="679.500">센터</text><text x="31" y="758.500">오피스텔</text>
              <text x="332" y="700">안동</text><text x="332" y="713">출입국센터</text><text x="389" y="667.500">신한은행</text>
              <text x="568" y="787.500">안동대학교</text><text x="568" y="800.500">우편취급국</text>
              <g class="brown"><text x="73.500" y="438">신전떡볶이</text><text x="168" y="449">커피베이</text><text x="236" y="552">피오르달리조</text></g>
              <g class="orange"><text x="110" y="486">퀸마트</text><text x="270" y="396.500">퀸마트</text><text x="221" y="407.500">CU</text><text x="331" y="432">GS25</text><text x="131" y="575.500">세븐일레븐</text><text x="210.500" y="602.500">GS25</text><text x="63.500" y="614">CU</text><text x="617" y="657.500">GS25</text></g>
              <text class="tan" x="552" y="538">역동서원</text><text class="blue" x="496" y="651.500">안동대학교</text>
            </g>

            <use href="#food" x="64.900" y="414.900" width="16" height="16"/>
            <g transform="translate(166.500 433.700)"><circle r="7" fill="#d68a31"/><path d="M-3.500-2.500H2.300V2q0 1.500-1.500 1.500h-2.800q-1.500 0-1.500-1.500z" fill="#fff"/><circle cx="2.800" cy="-.3" r="1.400" fill="none" stroke="#fff" stroke-width=".8"/></g>
            <use href="#basket" x="102" y="462.400" width="16" height="16"/><use href="#basket" x="261.500" y="373.300" width="16" height="16"/>
            <use href="#store" x="323.300" y="408.800" width="16" height="16"/><use href="#store" x="215" y="384.500" width="16" height="16"/>
            <use href="#food" x="227.700" y="528.600" width="16" height="16"/>
            <use href="#store" x="123" y="552.200" width="16" height="16"/><use href="#store" x="202.900" y="578.500" width="16" height="16"/><use href="#store" x="55.800" y="590.800" width="16" height="16"/><use href="#store" x="609.200" y="633.900" width="16" height="16"/><use href="#store" x="508.900" y="844" width="16" height="16"/>
            <use href="#parking" x="276.500" y="633" width="16" height="16"/><use href="#parking" x="362.400" y="812.400" width="16" height="16"/><use href="#parking" x="716.300" y="701.400" width="16" height="16"/>
            <g transform="translate(64.100 558)"><circle r="7" fill="#7a878e"/><path d="M-3.500 4V0L0-3L3.500 0V4z" fill="#fff"/><path d="M0-5V-1M-1.300-3.800H1.300" stroke="#fff" stroke-width=".9"/></g>
            <circle cx="18" cy="743.300" r="7.500" fill="#7a878e"/>
            <g transform="translate(331.800 684.600)"><circle r="7" fill="#c9ccd2"/><path d="M-2.500-2.500h5v5h-5z" fill="#6d7e8b"/></g>
            <g transform="translate(357.600 667.500)"><circle r="7" fill="#7a878e"/><path d="M-4-2.500L-2 2.700L0-2L2 2.700L4-2.500M-4.500-.3H4.500" fill="none" stroke="#fff" stroke-width="1.100"/></g>
            <g transform="translate(567.700 772)"><circle r="7" fill="#7a878e"/><rect x="-3.800" y="-2.700" width="7.600" height="5.400" rx=".8" fill="#fff"/><path d="M-3-1.500L0 1L3-1.500" fill="none" stroke="#7a878e" stroke-width=".9"/></g>
            <g transform="translate(551.300 522.500)"><circle r="7" fill="#a16b41"/><path d="M-4.200-1.500L-3-4H3L4.200-1.500H3V3.800H1V.5H-1V3.800H-3V-1.500z" fill="#fff"/></g>
            <g transform="translate(496.100 635.800)"><circle r="7" fill="#4488cb"/><path d="M-4.500-1L0-3.300L4.500-1L0 1.300z" fill="#fff"/><path d="M-2.700 1.200Q0 5.500 2.700 1.200L0 2.500z" fill="#fff"/></g>
            <use href="#bus" x="429.700" y="784.700" width="18" height="18"/><use href="#bus" x="433.200" y="803" width="18" height="18"/>
            <ellipse cx="515" cy="625" rx="4" ry="1.500" fill="#555" opacity=".4"/>
            <path d="M515.200 625.800L513.500 620Q511.500 614.500 505.500 608.300A13 13 0 1 1 525 608.300Q519 614.500 517 620z" fill="#2089fb" stroke="#1467cc" stroke-width=".6"/>
            <circle cx="515.300" cy="599.100" r="6.600" fill="#fff"/><path d="M512.700 597.500h5.200l-2.600 4.200z" fill="#2089fb"/>
            <g>
              <use href="#redpin" x="221" y="355.600" width="32" height="28"/><use href="#redpin" x="240.500" y="359.700" width="32" height="28"/><use href="#redpin" x="214.200" y="364" width="32" height="28"/><use href="#redpin" x="205.300" y="377.400" width="32" height="28"/><use href="#redpin" x="294.600" y="365.900" width="32" height="28"/><use href="#redpin" x="290" y="363.800" width="32" height="28"/><use href="#redpin" x="322.600" y="370.400" width="32" height="28"/><use href="#redpin" x="228.800" y="405" width="32" height="28"/><use href="#redpin" x="98.400" y="427.800" width="32" height="28"/><use href="#redpin" x="120.100" y="430.600" width="32" height="28"/><use href="#redpin" x="154.800" y="439" width="32" height="28"/><use href="#redpin" x="178.400" y="439" width="32" height="28"/><use href="#redpin" x="204" y="486.300" width="32" height="28"/><use href="#redpin" x="130" y="523.700" width="32" height="28"/>
            </g>
            <path d="M31.400 834V840.800H79.500V834" fill="none" stroke="#000" stroke-width="1.500"/>
            <text class="scale" x="84" y="842.800" textLength="19.500" lengthAdjust="spacingAndGlyphs">50m</text>
            <text class="kakao" x="111" y="841.300" textLength="33" lengthAdjust="spacingAndGlyphs">kakao</text>
          </svg>
          <div class="bubble">
            <p>솔뫼찜닭</p>
            <p>추천메뉴 ☆ 찜닭 ☆ 치즈찜닭 ☆ 양이 많아서 3~4명에서 먹어도 좋<br>다.</p>
            <svg class="bubble-tail" viewBox="0 0 11 7"><path d="M.2 0L5 6.300L10.800 0z" fill="#fff"/><path d="M0 .6L5 6.300L11 .6" fill="none" stroke="#7682b4" stroke-width=".8"/></svg>
          </div>
        </div>

        <section class="list">
          <div class="list-body">
            <h3>솔뚜껑삼겹살</h3><p>추천메뉴 ☆ 삼겹살 ☆ 두툼한 삼겹살에 명이나물을!</p>
            <h3>비행장</h3><p>추천메뉴 ☆ 김치양념삼겹살 ☆ 김치양념삼겹살을 먹고 볶음밥이 필수<br>다.</p>
            <h3>송천솔뫼국밥</h3><p>추천메뉴 ☆ 돼지국밥 ☆ 순대국밥 ☆ 술먹고 해장하기 좋다.</p>
            <h3>구이마을</h3><p>추천메뉴 ☆ 치즈불삼겹 ☆ 삼겹살 ☆ 치즈불삼겹이 유명하고 맛있다.</p>
            <h3>일미닭갈비</h3><p>추천메뉴 ☆ 감자탕 ☆ 닭갈비 ☆ 닭갈비에 볶음밥은 무조건이다.</p>
            <h3>사랑드림</h3><p>추천메뉴 ☆ 뼈해장국 ☆ 뚝배기 불고기 ☆ 모든 음식이 무난하다.</p>
            <h3>청춘밥상</h3><p>&nbsp;</p>
          </div>
          <div class="bar list-bar"><i class="up"></i><i class="thumb"></i><i class="down"></i></div>
        </section>
      </main>
      <footer class="footer">광고 연락주세요.</footer>
    </div>
    <div class="bar page-bar"><i class="up"></i><i class="thumb"></i><i class="down"></i></div>
  </div>
</div>
</body>
</html>
```

FILE: styles.css
```css
* { box-sizing: border-box; margin: 0; padding: 0; }
/* 1rem is ten layout units across a 156.8rem wide window */
html { font-size: 26.122px; }
body { width: 100vw; height: 100vh; overflow: hidden; background: #f3f3f3; font-family: "Noto Sans CJK KR", "Noto Sans", sans-serif; }
svg { display: block; flex: none; }
.window { height: 100vh; display: flex; flex-direction: column; }

.tabbar { height: 3.73rem; flex: none; display: flex; align-items: center; background: #cdcdcd; padding-top: .55rem; box-shadow: inset 0 -.08rem .08rem #bdbdbd; }
.avatar { width: 2.4rem; height: 2.6rem; margin-left: .75rem; margin-top: -.2rem; }
.workspace { width: 1.6rem; height: 1.6rem; margin-left: 1.7rem; }
.tab { width: 23.7rem; height: 100%; margin-left: 1.45rem; padding: 0 1.05rem 0 1.3rem; display: flex; align-items: center; background: #f7f7f7; border-radius: .5rem .5rem 0 0; box-shadow: 0 0 .15rem #aaa; clip-path: inset(-.3rem -.3rem 0 -.3rem); }
.tab-doc { width: 1.15rem; height: 1.6rem; }
.tab-title { width: 17.3rem; margin-left: 1.2rem; overflow: hidden; white-space: nowrap; font: 1.19rem/1.7 "Noto Sans", sans-serif; letter-spacing: -.026rem; color: #222; -webkit-mask-image: linear-gradient(90deg, #000 90%, transparent 100%); mask-image: linear-gradient(90deg, #000 90%, transparent 100%); }
.tab-close { width: .95rem; height: .95rem; margin-left: auto; }
.newtab { width: 1.4rem; height: 1.4rem; margin-left: 1.05rem; }
.controls { margin-left: auto; align-self: flex-start; display: flex; gap: 3.35rem; padding-right: 2rem; margin-top: .15rem; }
.controls svg { width: 1.2rem; height: 1.2rem; }

.toolbar { height: 3.8rem; flex: none; display: flex; align-items: center; background: #f7f7f7; }
.back { width: 1.8rem; height: 1.8rem; margin-left: 1.6rem; }
.reload { width: 1.8rem; height: 1.8rem; margin-left: 2.55rem; }
.address { width: 125rem; height: 3.06rem; margin-left: 1.85rem; padding: 0 1.55rem 0 1.65rem; display: flex; align-items: center; background: #fff; border-radius: 1.55rem; box-shadow: 0 0 .3rem #e2e2e2; }
.info { width: 1.8rem; height: 1.8rem; }
.url { margin-left: 1.35rem; font: 1.35rem/1.5 "Noto Sans", sans-serif; color: #777; letter-spacing: -.031rem; }
.url b { font-weight: 400; color: #1a1a1a; }
.address-icons { display: flex; gap: 2.15rem; margin-left: auto; }
.address-icons svg, .tools svg { width: 1.8rem; height: 1.8rem; }
.tools { display: flex; gap: 2.55rem; margin-left: 1.8rem; }

.viewport { height: 87.8rem; margin: 0 .08rem; display: flex; background: #fcfcfc; border-radius: .8rem; overflow: hidden; box-shadow: 0 0 .15rem #aaa; }
.page { width: 155.15rem; background: #fff9d5; }
.brand { height: 9.35rem; padding-top: 2.6rem; display: flex; justify-content: center; }
.logo { width: 12.6rem; height: 5.6rem; overflow: visible; }
.logo-main { font: 900 34px "Inter", "Lato", sans-serif; fill: #ef8a08; stroke: #ef8a08; stroke-width: 1.8px; }
.logo-sub { font: 700 22.5px "Liberation Serif", serif; fill: #a95d04; stroke: #a95d04; stroke-width: .7px; }
.searchrow { height: 5.45rem; padding: 0 1rem 1rem 1rem; display: flex; align-items: center; }
.search { width: 17.7rem; height: 4.4rem; padding: 0 0 .2rem .5rem; border: 0; border-radius: .4rem 0 0 .4rem; background: #fff; font: 1.41rem "Noto Sans CJK KR", sans-serif; outline: 0; }
.search::placeholder { color: #8a8a8a; }
.search-btn { width: 4.6rem; height: 4.45rem; margin-left: .55rem; border: 0; border-radius: 0 .4rem .4rem 0; background: #ff9800; display: grid; place-items: center; }
.search-btn svg { width: 1.8rem; height: 2rem; margin-top: .3rem; }
.login { width: 7.7rem; height: 4.1rem; margin-left: auto; padding-bottom: .55rem; border: 0; border-radius: .4rem; background: #ff9800; color: #fff; font: 900 1.77rem "Noto Sans CJK KR", sans-serif; }
.nav { height: 6.42rem; padding: 0 .95rem 0 1.05rem; display: grid; grid-template-columns: repeat(3, 1fr); align-items: center; justify-items: center; background: #eee; }
.nav a { display: grid; place-items: center; width: 6.15rem; height: 4.45rem; padding-bottom: .6rem; border-radius: .4rem; background: #fff; color: #333; font-size: 1.77rem; font-weight: 900; }

.main { height: 58.7rem; padding: 2rem 3.85rem 0 2.02rem; display: flex; justify-content: space-between; }
.map { position: relative; width: 98.8rem; height: 54.35rem; overflow: hidden; }
.map-canvas { width: 100%; height: 100%; }
#roads path, .sand, .track, .white-line, .pitch, .contour, .bld path, .seam, .parking path, .crossing path { vector-effect: non-scaling-stroke; }
.land { fill: #eff4f0; }
.campus { fill: #d1e2ee; }
.lawn { fill: #dce8f0; }
.sand { fill: #ebdfc3; }
.sand.edge { stroke: #d3b9a6; stroke-width: 3px; }
.green { fill: #c2d9ae; }
.clay { fill: #d6c2b7; }
.track { fill: none; stroke: #dce8f0; stroke-width: 6px; }
.white-line { fill: none; stroke: #f6f0e0; stroke-width: 2.5px; }
.white-line.w { stroke: #fafcfd; stroke-width: 3.5px; }
.pitch { fill: none; stroke: #e2eed8; stroke-width: 2.5px; }
.contour { fill: none; stroke: #e3e9e2; stroke-width: 2.4px; }
.contour.major { stroke: #d0d8ce; stroke-width: 2.8px; }
.bld { fill: #fdfdfd; stroke: #e3e5e4; stroke-width: 1.5px; }
.campus-bld { fill: #fcfdff; stroke: #dedfe2; }
.seam { fill: none; stroke: #dcdcde; stroke-width: 1.5px; }
.parking { fill: none; stroke: #cbd2d8; stroke-width: 17px; stroke-dasharray: 2 7; }
.parking .dense { stroke-width: 36px; stroke: #cbd3da; stroke-dasharray: 3 3; }
.casing { fill: none; stroke: #dcd8d6; --edge: 3px; }
.surface { fill: none; stroke: #fff; --edge: 0px; }
.r0 { stroke-width: calc(27px + var(--edge)); }
.r1 { stroke-width: calc(21px + var(--edge)); }
.r2 { stroke-width: calc(12px + var(--edge)); }
.r3 { stroke-width: calc(9px + var(--edge)); }
.r0, .r1, .r2, .r3 { stroke-linejoin: round; }
.crossing { fill: none; stroke: #e2dad3; stroke-width: 8px; }
.roundabout { fill: #fff; stroke: #dcd7d5; stroke-width: .5px; }
.lbl { fill: #35404b; text-anchor: middle; font-family: "Noto Sans CJK KR", sans-serif; font-weight: 500; stroke: #fff; stroke-width: 1.8px; stroke-opacity: .85; paint-order: stroke; stroke-linejoin: round; }
.l10 { font-size: 10.7px; }
.l10 .s { font-size: 9.6px; }
.l12 { font-size: 11.6px; }
.lbl .height { fill: #62805a; font-size: 10px; font-weight: 400; }
.brown { fill: #c66d10; }
.orange { fill: #ed7414; }
.tan { fill: #99713a; }
.blue { fill: #2067b5; }
.scale { font: 700 9.5px "Noto Sans", sans-serif; stroke: #fff; stroke-width: 1px; paint-order: stroke; }
.kakao { font: 700 12px "Noto Sans", sans-serif; fill: #222; }
.bubble { position: absolute; left: 12.7rem; top: 1rem; width: 38.1rem; height: 4.95rem; padding: .26rem .55rem; background: #fff; border: .08rem solid #7682b4; font-size: 1.22rem; font-weight: 900; line-height: 1.94rem; white-space: nowrap; }
.bubble p { word-spacing: .17rem; }
.bubble-tail { position: absolute; left: 18.5rem; top: 4.76rem; width: 1.1rem; height: .7rem; }

.list { display: flex; width: 46.5rem; height: 54.35rem; background: #eee; border-radius: .4rem 0 0 .4rem; overflow: hidden; }
.list-body { width: 45.05rem; padding: 0 1rem; }
.list h3 { height: 3.76rem; font-size: 1.57rem; font-weight: 900; line-height: 3.64rem; -webkit-text-stroke: .03rem #000; }
.list p { padding: 1rem 0 1.12rem; background: #fff; border-radius: .4rem; text-align: center; font-size: 1.36rem; font-weight: 900; line-height: 2.02rem; word-spacing: .26rem; letter-spacing: -.005rem; white-space: nowrap; }
.bar { display: flex; flex-direction: column; align-items: center; background: #fcfcfc; }
.bar i { display: block; width: .9rem; flex: none; }
.bar .up, .bar .down { height: .7rem; background: #8b8b8b; clip-path: polygon(50% 0, 100% 100%, 0 100%); }
.bar .down { clip-path: polygon(0 0, 100% 0, 50% 100%); margin-top: auto; }
.bar .thumb { background: #8b8b8b; border-radius: .45rem; margin-top: .8rem; }
.list-bar { width: 1.45rem; padding: .78rem 0; }
.list-bar .thumb { height: 17.9rem; }
.page-bar { flex: 1; padding: .78rem 0; }
.page-bar .thumb { height: 81.4rem; }
.footer { height: 7.9rem; background: #808080; color: #000; text-align: center; font-size: 1.38rem; font-weight: 900; line-height: 2.14rem; word-spacing: .2rem; }
```
